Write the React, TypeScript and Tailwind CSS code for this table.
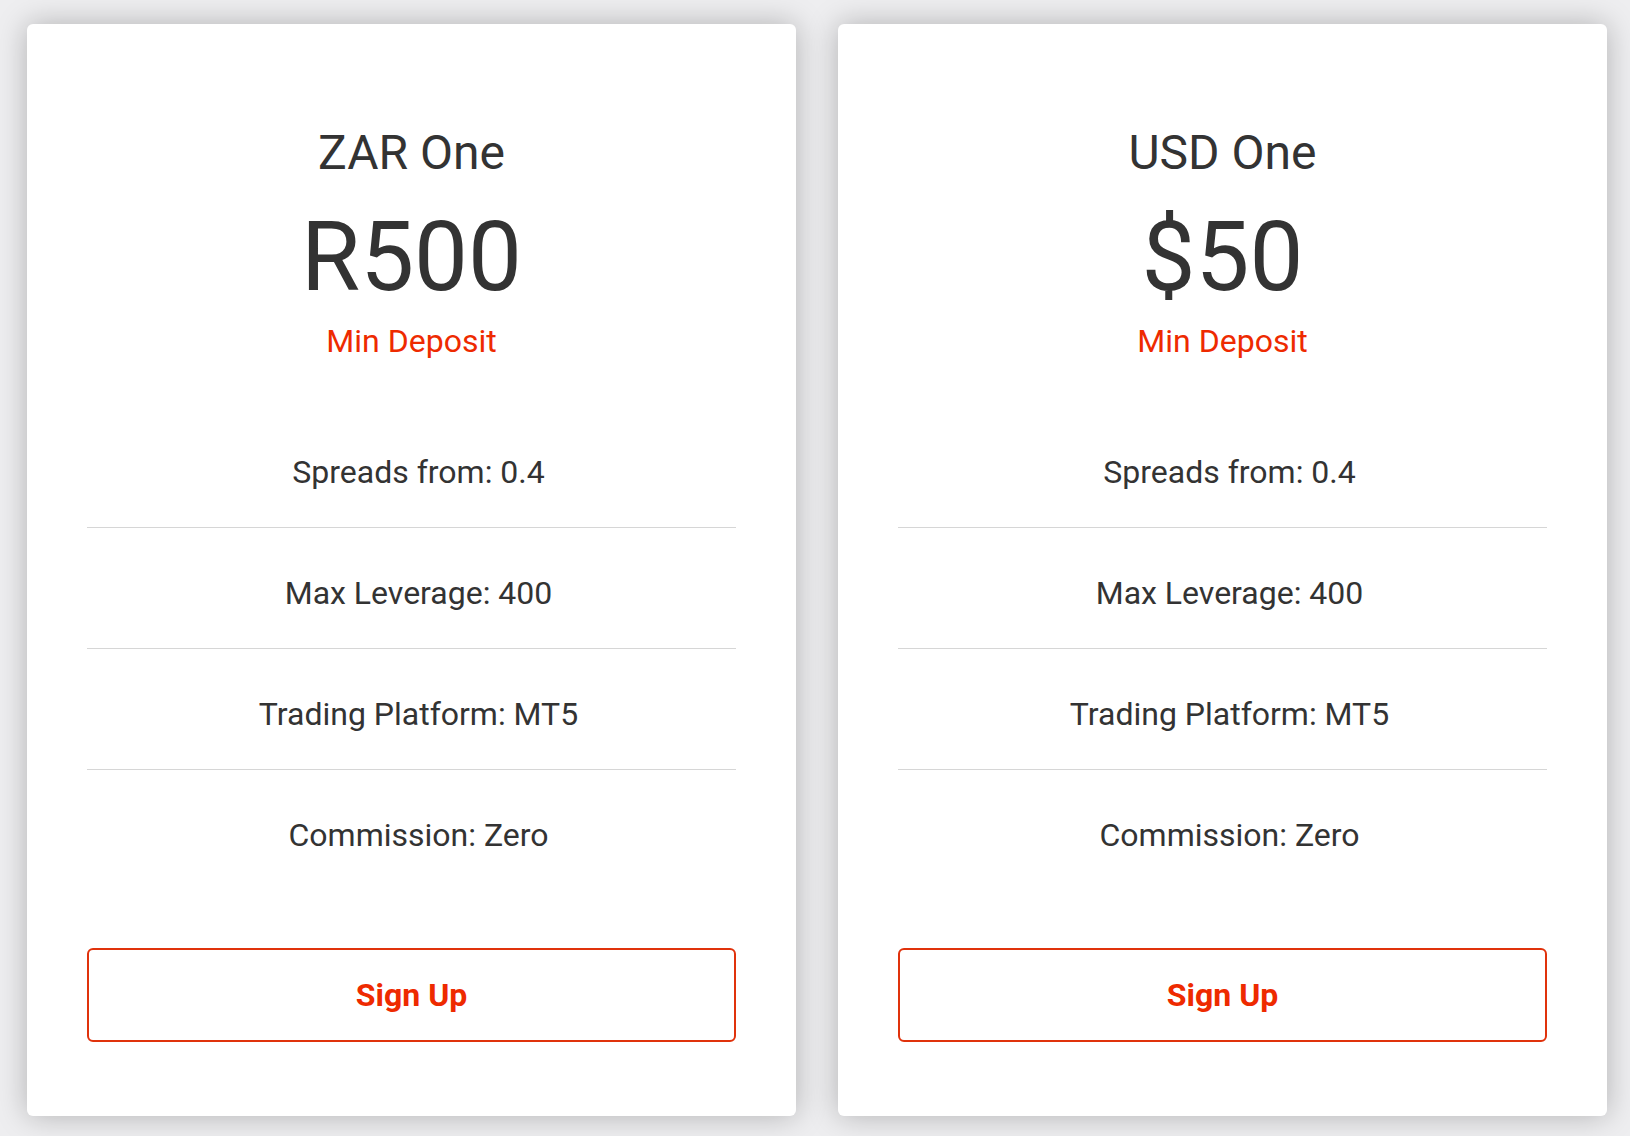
export default function App() {
  const plans = [
    { name: "ZAR One", price: "R500" },
    { name: "USD One", price: "$50" },
  ];
  const features = [
    "Spreads from: 0.4",
    "Max Leverage: 400",
    "Trading Platform: MT5",
    "Commission: Zero",
  ];

  return (
    <div
      className="min-h-screen w-full bg-[#eeeef0] pt-[24px] pl-[27px] flex gap-[42px] text-[#333333]"
      style={{ fontFamily: "Roboto, 'Liberation Sans', sans-serif" }}
    >
      {plans.map((plan) => (
        <div
          key={plan.name}
          className="w-[769px] h-[1092px] bg-white rounded-[6px] shadow-[0_0_30px_rgba(0,0,0,0.26)] flex flex-col items-center px-[60px] pt-[103px] pb-[74px]"
        >
          <h3 className="text-[48px] leading-[52px] font-normal">{plan.name}</h3>
          <div className="mt-[28px] text-[96px] leading-[100px] font-normal">
            {plan.price}
          </div>
          <div className="mt-[16px] text-[32px] leading-[36px] text-[#ee2a00]">
            Min Deposit
          </div>

          <ul className="mt-[48px] w-full">
            {features.map((f, i) => (
              <li
                key={f}
                className={`text-center text-[32px] leading-[36px] pl-[14px] pt-[47px] pb-[37px] ${
                  i < features.length - 1 ? "border-b border-[#d6d6d6]" : ""
                }`}
              >
                {f}
              </li>
            ))}
          </ul>

          <button className="mt-[58px] w-full h-[94px] rounded-[6px] border-2 border-[#e0320c] text-[#ee2a00] text-[32px] font-bold">
            Sign Up
          </button>
        </div>
      ))}
    </div>
  );
}
